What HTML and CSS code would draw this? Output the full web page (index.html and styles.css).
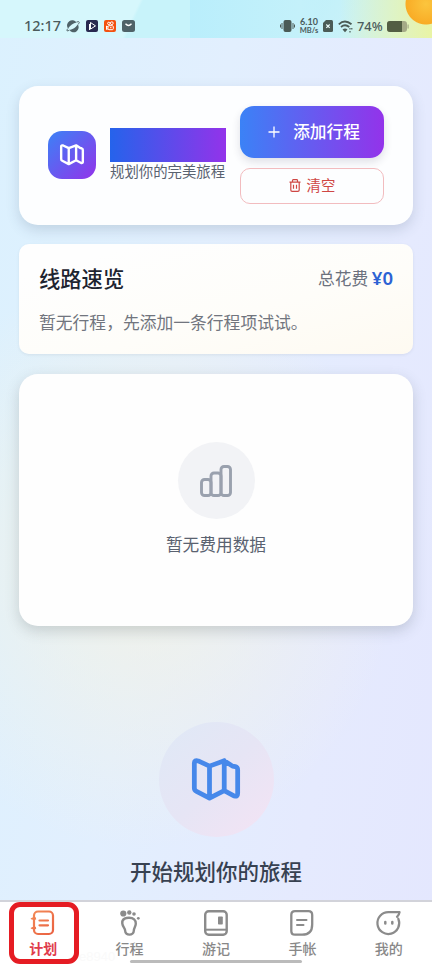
FILE: index.html
```html
<!DOCTYPE html>
<html lang="zh-CN">
<head>
<meta charset="utf-8">
<meta name="viewport" content="width=device-width, initial-scale=1">
<title>计划</title>
<link rel="stylesheet" href="styles.css">
</head>
<body>
<svg class="defs" width="0" height="0" aria-hidden="true">
  <defs>
    <symbol id="map" viewBox="0 0 24 24"><path d="M9 5.600v14.800M15.800 3.100v13.800M2 4.200v11.500q0 1.100 1 1.600l6 3.100 6.800-3.500 4.700 2.500q1.500.4 1.500-1.200V7.300q0-1.200-1.100-1.500l-1.300-.2-3.800-2.500L9 5.600 3.800 3.200Q2 2.700 2 4.200z" fill="none" stroke="currentColor" stroke-width="2.200" stroke-linejoin="round" stroke-linecap="round"/></symbol>
  </defs>
</svg>
<header class="status">
  <div class="status-left">
    <span class="clock">12:17</span>
    <svg width="14" height="14" viewBox="0 0 14 14"><path d="M2 9.500A4.800 4.800 0 0 1 10.500 3.500Q5.500 4.500 2 9.500zM3.500 11A4.800 4.800 0 0 0 11.800 5.500Q8.500 10 3.500 11z" fill="#4f6268"/><path d="M10.500 3q3-1 2.800.4T11.800 5.500M2 9.500Q.2 11.300 1 11.800t2.500-.8" fill="none" stroke="#4f6268" stroke-width=".9"/></svg>
    <svg width="12" height="12" viewBox="0 0 12 12"><rect width="12" height="12" rx="2" fill="#292950"/><path d="M3.500 4v6M4.500 2.500l5 3.400-5 3.200z" fill="none" stroke="#fff"/></svg>
    <svg width="12" height="12" viewBox="0 0 12 12"><rect width="12" height="12" rx="2" fill="#f4510f"/><g fill="none" stroke="#fff"><circle cx="4.800" cy="3.400" r="1.200"/><circle cx="7.800" cy="3.200" r="1.400"/><rect x="4" y="5.700" width="5.300" height="4" rx="1"/><path d="M4 7L2.500 6v3.500L4 8.700M6 7.700h1.500"/></g></svg>
    <svg width="13" height="12" viewBox="0 0 13 12"><rect width="13" height="12" rx="2.500" fill="#4f6268"/><path d="M3.500 3.800q3 3.400 6 0" fill="none" stroke="#fff" stroke-width="1.300"/></svg>
  </div>
  <div class="status-right">
    <svg width="15" height="14" viewBox="0 0 15 14"><rect x="3.500" y="1" width="8" height="12" rx="2" fill="#4b5b56"/><path d="M2 4v6M13 4v6M.5 5.500v3M14.500 5.500v3" stroke="#4b5b56"/></svg>
    <span class="speed"><b class="rate">6.10</b><b class="unit">MB/s</b></span>
    <svg class="sim" width="10" height="12" viewBox="0 0 10 12"><path d="M3 0h5.500Q10 0 10 1.500v9Q10 12 8.500 12h-7Q0 12 0 10.500V3z" fill="#4b5b56"/><path d="M3.300 4.500l3.400 3.400M6.700 4.500L3.300 7.900" stroke="#e9f8f7" stroke-width="1.200"/></svg>
    <svg class="wifi" width="15" height="13" viewBox="0 0 15 13"><path d="M.8 4.300q6-5.500 12.700 0M3 7q4-3.500 8.300 0" fill="none" stroke="#4b5b56" stroke-width="1.800"/><path d="M4.500 9.500q2.700-2 5 0L7 12.300z" fill="#4b5b56"/><path d="M12 8v1.500M12 11v1.500M13.800 8v1.500" stroke="#4b5b56" stroke-width="1.200"/></svg>
    <span class="percent">74%</span>
    <svg width="22" height="11" viewBox="0 0 22 11"><rect width="20" height="11" rx="3" fill="#a5aa86"/><path d="M3 0h12v11H3Q0 11 0 8V3Q0 0 3 0z" fill="#535e43"/><rect x="20.500" y="3.500" width="1.200" height="4" fill="#a5aa86"/></svg>
  </div>
</header>

<main class="page">
  <section class="card hero">
    <div class="brand-icon"><svg width="26" height="26"><use href="#map"/></svg></div>
    <div class="brand">
      <div class="brand-title"></div>
      <p class="brand-sub">规划你的完美旅程</p>
    </div>
    <div class="actions">
      <button class="add"><svg width="12" height="12" viewBox="0 0 12 12"><path d="M6 .5v11M.5 6h11" stroke="#fff" stroke-width="1.300"/></svg><span>添加行程</span></button>
      <button class="clear"><svg width="12" height="13" viewBox="0 0 12 13"><path d="M.5 3.200h11M3.500 3V1.500q0-.8.800-.8h3.400q.8 0 .8.800V3M1.800 3.500v7.500q0 1.300 1.300 1.300h5.800q1.300 0 1.300-1.300V3.500M4.500 5.800v4M7.500 5.800v4" fill="none" stroke="currentColor" stroke-width="1.200"/></svg><span>清空</span></button>
    </div>
  </section>

  <section class="card overview">
    <div class="overview-head">
      <h2>线路速览</h2>
      <div class="total">总花费 <strong>¥0</strong></div>
    </div>
    <p>暂无行程，先添加一条行程项试试。</p>
  </section>

  <section class="card costs">
    <div class="costs-icon"><svg width="34" height="34" viewBox="0 0 34 34"><g fill="none" stroke="#9aa1ae" stroke-width="2.900"><rect x="2.500" y="15.500" width="9.500" height="16" rx="3"/><rect x="12" y="9" width="10" height="22.500" rx="3"/><rect x="22" y="2.500" width="9.500" height="29" rx="3"/></g></svg></div>
    <p>暂无费用数据</p>
  </section>

  <section class="empty">
    <div class="empty-icon"><svg width="52" height="52"><use href="#map"/></svg></div>
    <h3>开始规划你的旅程</h3>
  </section>
</main>

<nav class="tabs">
  <a class="tab active">
    <svg width="28" height="28" viewBox="0 0 28 28"><defs><linearGradient id="warm" gradientUnits="userSpaceOnUse" x1="3" y1="3" x2="25" y2="25"><stop offset="0" stop-color="#f28a57"/><stop offset="1" stop-color="#ea6041"/></linearGradient></defs><g fill="none" stroke="url(#warm)" stroke-width="2.200"><rect x="5" y="2.500" width="19" height="22.500" rx="4"/><path d="M2.500 9q.5 1 4.500.3M2.500 18.500q.5 1 4.500.3"/><path d="M10.500 11.500h8.500M10.500 16.300h8.500" stroke-linecap="round"/></g></svg>
    <span>计划</span>
  </a>
  <a class="tab">
    <svg width="28" height="28" viewBox="0 0 28 28"><g fill="#8b8b8b"><circle cx="7.300" cy="4.500" r="3.100"/><circle cx="13.300" cy="3.500" r="2.200"/><circle cx="18" cy="5" r="1.800"/><circle cx="22.300" cy="9.300" r="1.400"/></g><path d="M6.300 14.500C5.500 9 11 8.800 13 8.800c4.500 0 7 2.200 6.800 6-.1 3-2 4-2 7 0 5-8.600 5-8.600.2 0-3-2.400-3.500-2.900-7.500z" fill="none" stroke="#8b8b8b" stroke-width="2.400"/></svg>
    <span>行程</span>
  </a>
  <a class="tab">
    <svg width="28" height="28" viewBox="0 0 28 28"><rect x="3.200" y="2.200" width="21.500" height="23.500" rx="3.500" fill="none" stroke="#8b8b8b" stroke-width="2.400"/><path d="M3.500 20.700h21" stroke="#8b8b8b" stroke-width="2"/><rect x="16" y="7.500" width="4.800" height="8" rx=".8" fill="#8b8b8b"/></svg>
    <span>游记</span>
  </a>
  <a class="tab">
    <svg width="28" height="28" viewBox="0 0 28 28"><path d="M7 2.200h13.500q3.700 0 3.700 3.700v9.500q0 10.300-10 10.300H7q-3.700 0-3.700-3.700V5.900q0-3.700 3.700-3.700z" fill="none" stroke="#8b8b8b" stroke-width="2.300"/><path d="M9 11h9.500M9 16h6.500" stroke="#8b8b8b" stroke-width="2" stroke-linecap="round"/></svg>
    <span>手帐</span>
  </a>
  <a class="tab">
    <svg width="28" height="28" viewBox="0 0 28 28"><path d="M22 7.800C23.500 6.500 24.300 5.300 24.600 3.200H13.500a10.900 10.900 0 1 0 9.800 6.500" fill="none" stroke="#8b8b8b" stroke-width="2.200" stroke-linejoin="round" stroke-linecap="round"/><path d="M10.300 13v1.500M17.300 13v1.500" stroke="#8b8b8b" stroke-width="2.500" stroke-linecap="round"/></svg>
    <span>我的</span>
  </a>
  <span class="trace">e8940</span>
  <i class="marker"></i>
  <i class="home-bar"></i>
</nav>
</body>
</html>
```

FILE: styles.css
```css
* { box-sizing: border-box; }

body {
  margin: 0;
  width: 432px;
  height: 964px;
  overflow: hidden;
  display: flex;
  flex-direction: column;
  font-family: "Noto Sans CJK SC", sans-serif;
  background:
    radial-gradient(ellipse 260px 290px at 140px 560px, rgba(246, 243, 226, .8), rgba(246, 243, 226, 0)),
    linear-gradient(100deg, #dbf1fe 0%, #e2effe 40%, #e5eafe 75%, #e4e7fe 100%);
}

h2, h3, p { margin: 0; font-weight: 400; }
svg { display: block; flex: none; }
.defs { position: absolute; }

.status {
  height: 38px;
  flex: none;
  display: flex;
  justify-content: space-between;
  padding: 13px 24px 0;
  color: #4b5b5c;
  background:
    radial-gradient(circle at 426px 4px, #fbc53e 0, #f9ac26 20px, rgba(249, 172, 38, 0) 21px),
    linear-gradient(90deg, transparent 340px, #e3f3b8 410px, #e9f4a5),
    linear-gradient(90deg, transparent 190px, #b9eefc 190px, #c4f1fa 300px, transparent 340px),
    linear-gradient(115deg, #d6f7fc 0 127px, #c8f3fa 130px 190px, #b9eefc 240px, #c9f2f8 330px, #d4f5ee);
}

.status-left, .status-right {
  display: flex;
  align-items: center;
  height: 26px;
}

.status-left { gap: 6px; }
.clock { font: 500 14.5px/24px "Noto Sans", sans-serif; height: 26px; width: 36px; white-space: nowrap; }
.status-right { margin-right: -1px; }
.speed { width: 22px; margin-left: 3px; text-align: center; }
.speed b { display: block; font-family: Lato, sans-serif; font-weight: 700; }
.speed .rate { font-size: 9px; line-height: 11px; margin-top: -1px; }
.speed .unit { font-size: 7.5px; line-height: 9px; margin-top: -1px; }
.sim { margin-left: 3px; }
.wifi { margin-left: 5px; }
.percent { width: 26px; margin: 0 4px; font: 500 12.8px/26px "Noto Sans", sans-serif; white-space: nowrap; }

.page {
  height: 862px;
  flex: none;
  padding: 48px 19px 0;
  display: flex;
  flex-direction: column;
  overflow: hidden;
}

.card { flex: none; background: #fdfeff; border-radius: 19px; }

.hero {
  height: 139px;
  padding: 0 29px 2px;
  display: flex;
  align-items: center;
  box-shadow: 0 5px 13px rgba(65, 85, 110, .19);
}

.brand-icon {
  width: 48px;
  height: 48px;
  flex: none;
  border-radius: 14px;
  display: grid;
  place-items: center;
  color: #fff;
  background: linear-gradient(135deg, #3b82f6, #9333ea);
}

.brand { width: 116px; margin-left: 14px; }
.brand-title { height: 34px; background: linear-gradient(90deg, #2563eb, #9333ea); }
.brand-sub { margin: -1px 0 1px; font-size: 14.4px; line-height: 20px; color: #596270; white-space: nowrap; }

.actions { width: 144px; margin-left: 14px; display: grid; gap: 10px; }

button {
  width: 144px;
  padding: 0;
  border: 0;
  display: flex;
  align-items: center;
  justify-content: center;
  font-family: inherit;
}

.add {
  height: 52px;
  gap: 13px;
  border-radius: 14px;
  color: #fff;
  font-size: 16.7px;
  font-weight: 500;
  padding-left: 8px;
  padding-right: 4px;
  background: linear-gradient(90deg, #3b82f6, #9333ea);
  box-shadow: 0 4px 8px rgba(40, 40, 80, .14);
}

.clear {
  height: 36px;
  gap: 6px;
  border: 1px solid #f2bcbf;
  border-radius: 10px;
  background: transparent;
  color: #cf4744;
  font-size: 14.4px;
}

.add span, .clear span { margin-top: -2px; }

.overview {
  height: 110px;
  margin-top: 19px;
  padding: 18px 20px 0;
  border-radius: 10px;
  background: linear-gradient(165deg, #fefefe 15%, #fefdf9 60%, #fefaf1);
  box-shadow: 0 1px 3px rgba(65, 85, 110, .1);
}

.overview-head { display: flex; justify-content: space-between; align-items: center; height: 32px; }
h2 { font-size: 21.3px; font-weight: 500; line-height: 32px; color: #1d2430; }
.total { font-size: 16.7px; color: #6b717d; line-height: 28px; white-space: nowrap; }
.total strong { font-family: "Noto Sans", sans-serif; font-size: 18.5px; font-weight: 600; color: #2c62d4; }
.overview p { margin-top: 16px; font-size: 16.8px; line-height: 24px; color: #71757e; }

.costs {
  height: 252px;
  margin-top: 20px;
  padding-top: 68px;
  display: flex;
  flex-direction: column;
  align-items: center;
  background: #fefefe;
  box-shadow: 0 5px 14px rgba(70, 80, 90, .22);
}

.costs-icon { width: 77px; height: 77px; border-radius: 50%; background: #f2f3f6; display: grid; place-items: center; }
.costs p { margin-top: 13px; font-size: 16.7px; line-height: 24px; color: #5a6270; }

.empty { margin-top: 96px; display: flex; flex-direction: column; align-items: center; }

.empty-icon {
  width: 115px;
  height: 115px;
  border-radius: 50%;
  display: grid;
  place-items: center;
  color: #4688ea;
  background: linear-gradient(135deg, #dfe9f6, #e6e5f5 50%, #f4e3f4);
}

h3 { margin-top: 18px; font-size: 21.5px; line-height: 32px; font-weight: 500; color: #374151; }

.tabs {
  position: relative;
  height: 64px;
  flex: none;
  border-top: 2px solid #d2d3da;
  background: #fff;
  display: grid;
  grid-template-columns: repeat(5, 1fr);
}

.tab {
  display: flex;
  flex-direction: column;
  align-items: center;
  padding-top: 7px;
  color: #888;
  font-size: 14px;
  font-weight: 500;
  line-height: 20px;
}

.tab span { margin-top: 1px; }
.active { color: #df3d4c; font-weight: 700; }

.marker {
  position: absolute;
  left: 9px;
  top: 0;
  width: 70px;
  height: 62px;
  border: 5px solid #e51c23;
  border-radius: 11px;
}

.home-bar { position: absolute; left: 130px; bottom: 1px; width: 172px; height: 3px; border-radius: 2px; background: #bbb; }
.trace { position: absolute; left: 79px; bottom: 0; font: 13px/14px "Liberation Sans", sans-serif; color: #fafafa; }
```
